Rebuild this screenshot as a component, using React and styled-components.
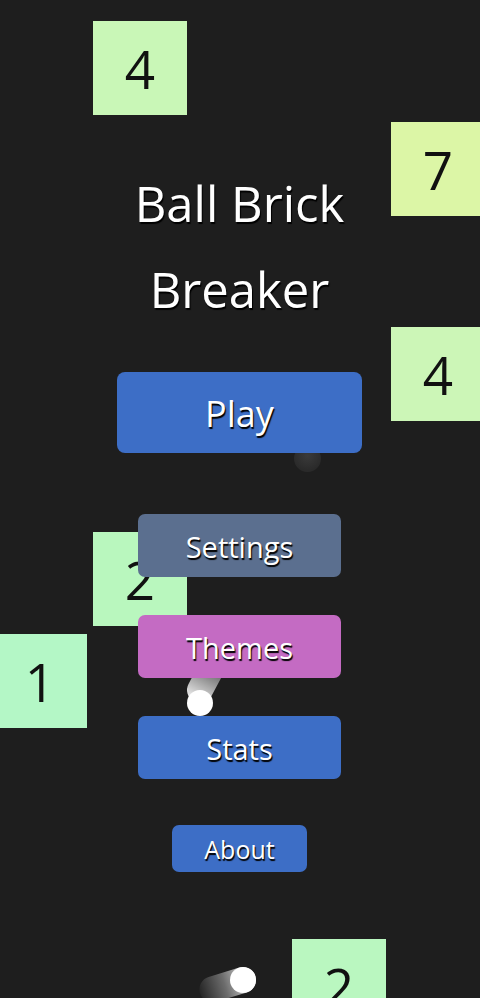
import React from 'react';
import styled, { createGlobalStyle } from 'styled-components';

const GlobalStyle = createGlobalStyle`
  html, body {
    margin: 0;
    padding: 0;
    background: #1e1e1e;
  }
  body {
    font-family: 'Open Sans', 'Noto Sans', sans-serif;
  }
`;

// bricks sitting on the board (game canvas)
const bricks = [
  { n: 4, x: 93, y: 21, color: '#c9f7b7' },
  { n: 7, x: 391, y: 122, color: '#dcf6a6' },
  { n: 4, x: 391, y: 327, color: '#ccf6b7' },
  { n: 2, x: 93, y: 532, color: '#b9f7be' },
  { n: 1, x: -7, y: 634, color: '#b4f7c6' },
  { n: 2, x: 292, y: 939, color: '#baf7c0' },
];

export default function App() {
  return (
    <>
      <GlobalStyle />
      <Screen>
        {bricks.map((b, i) => (
          <Brick key={i} $color={b.color} style={{ left: b.x, top: b.y }}>
            {b.n}
          </Brick>
        ))}

        <GhostBall />
        <TrailUp />
        <Ball $x={187} $y={690} />
        <TrailLeft />
        <Ball $x={230} $y={967} />

        <Menu>
          <Title>Ball Brick Breaker</Title>
          <MenuButton $size="large" $color="#3d6ec6">Play</MenuButton>
          <ButtonGroup>
            <MenuButton $size="medium" $color="#5b6f8f">Settings</MenuButton>
            <MenuButton $size="medium" $color="#c46bc3">Themes</MenuButton>
            <MenuButton $size="medium" $color="#3d6ec6">Stats</MenuButton>
          </ButtonGroup>
          <MenuButton $size="small" $color="#3d6ec6">About</MenuButton>
        </Menu>
      </Screen>
    </>
  );
}

const sizes = {
  large: { w: 245, h: 81, font: 36, radius: 8 },
  medium: { w: 203, h: 63, font: 29, radius: 7 },
  small: { w: 135, h: 47, font: 25, radius: 7 },
};

const Screen = styled.div`
  position: relative;
  width: 480px;
  height: 998px;
  overflow: hidden;
  background: #1e1e1e;
`;

const Brick = styled.div`
  position: absolute;
  width: 94px;
  height: 94px;
  background: ${p => p.$color};
  color: #111;
  font-family: 'Open Sans', 'Noto Sans', sans-serif;
  font-weight: 400;
  font-size: 53px;
  display: flex;
  align-items: center;
  justify-content: center;
`;

const Ball = styled.div`
  position: absolute;
  left: ${p => p.$x}px;
  top: ${p => p.$y}px;
  width: 26px;
  height: 26px;
  border-radius: 50%;
  background: #fff;
  z-index: 1;
`;

const GhostBall = styled.div`
  position: absolute;
  left: 294px;
  top: 445px;
  width: 27px;
  height: 27px;
  border-radius: 50%;
  background: radial-gradient(circle at 50% 40%, #3a3a3a, #2a2a2a 70%);
`;

const TrailUp = styled.div`
  position: absolute;
  left: 187px;
  top: 650px;
  width: 26px;
  height: 53px;
  border-radius: 13px;
  transform-origin: 50% calc(100% - 13px);
  transform: rotate(28deg);
  background: linear-gradient(to top, rgba(255, 255, 255, 0.95), rgba(255, 255, 255, 0.5) 50%, rgba(255, 255, 255, 0.1));
`;

const TrailLeft = styled.div`
  position: absolute;
  left: 198px;
  top: 967px;
  width: 58px;
  height: 26px;
  border-radius: 13px;
  transform-origin: calc(100% - 13px) 50%;
  transform: rotate(-17deg);
  background: linear-gradient(to left, rgba(255, 255, 255, 0.95), rgba(255, 255, 255, 0.35) 55%, rgba(255, 255, 255, 0.03));
`;

const Menu = styled.div`
  position: relative;
  z-index: 2;
  display: flex;
  flex-direction: column;
  align-items: center;
  padding-top: 160px;
  padding-right: 1px;
`;

const Title = styled.h1`
  margin: 0 0 40px;
  max-width: 270px;
  font-family: 'Open Sans', 'Noto Sans', sans-serif;
  font-weight: 400;
  font-size: 49px;
  line-height: 86px;
  color: #fff;
  text-align: center;
  text-shadow: 1px 2px 1px #000;
`;

const ButtonGroup = styled.div`
  display: flex;
  flex-direction: column;
  align-items: center;
  gap: 38px;
  margin: 61px 0 46px;
`;

const MenuButton = styled.button`
  width: ${p => sizes[p.$size].w}px;
  height: ${p => sizes[p.$size].h}px;
  border: none;
  border-radius: ${p => sizes[p.$size].radius}px;
  background: ${p => p.$color};
  color: #fff;
  font-family: 'Open Sans', 'Noto Sans', sans-serif;
  font-size: ${p => sizes[p.$size].font}px;
  line-height: 1;
  padding: 2px 0 0;
  text-shadow: 1px 2px 1px #000;
  cursor: pointer;
`;
